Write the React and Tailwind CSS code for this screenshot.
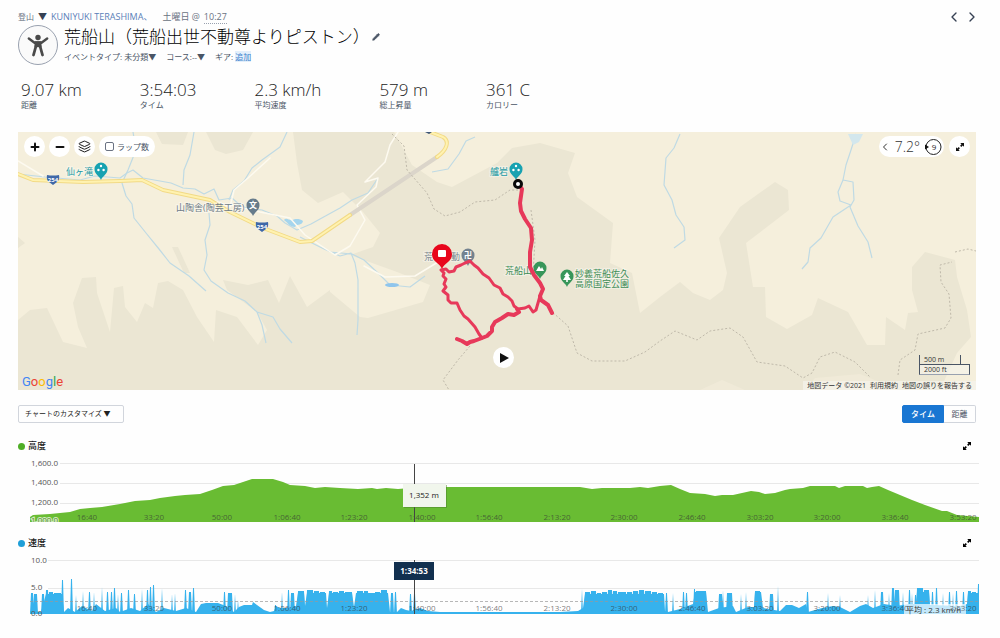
import { ChevronLeft, ChevronRight, Layers, Minus, Pencil, Plus } from "lucide-react";

const stats = [
  { value: "9.07 km", label: "距離" },
  { value: "3:54:03", label: "タイム" },
  { value: "2.3 km/h", label: "平均速度" },
  { value: "579 m", label: "総上昇量" },
  { value: "361 C", label: "カロリー" },
];

const timeTicks = [
  { x: 87, label: "16:40" },
  { x: 154, label: "33:20" },
  { x: 222, label: "50:00" },
  { x: 287, label: "1:06:40" },
  { x: 354, label: "1:23:20" },
  { x: 422, label: "1:40:00" },
  { x: 489, label: "1:56:40" },
  { x: 557, label: "2:13:20" },
  { x: 624, label: "2:30:00" },
  { x: 692, label: "2:46:40" },
  { x: 760, label: "3:03:20" },
  { x: 827, label: "3:20:00" },
  { x: 895, label: "3:36:40" },
  { x: 963, label: "3:53:20" },
];

const elevation =
  "30,517 33,515 50,514 60,513 70,512 80,509 90,508 102,507 120,504 135,501 150,500 160,498 175,496 185,495 200,494 212,490 223,486 234,485 243,482 252,479 273,479 283,482 290,485 305,486 315,488 325,487 340,488 358,489 372,488 377,489 386,488 398,489 410,488 440,487 580,487 592,489 602,488 630,488 640,487 648,488 660,486 671,485 680,489 690,493 705,494 715,496 722,495 733,495 742,493 751,491 759,492 765,494 775,493 785,490 790,489 803,488 810,486 835,486 839,488 845,486 863,486 867,488 872,487 879,486 888,490 900,495 912,500 925,505 942,511 947,511 957,515 979,517";

// [from, to, top] of each burst in the speed chart
const speedBars = [
  [31, 33, 593], [34, 37, 594], [42, 44, 594], [46, 48, 590], [49, 53, 592], [54, 61, 593], [62, 63, 580],
  [71, 72, 579], [76, 76, 595], [83, 83, 591], [89, 90, 592], [94, 94, 592], [102, 102, 587], [107, 108, 592],
  [111, 112, 592], [114, 115, 588], [118, 118, 594], [121, 122, 593], [128, 129, 590], [134, 135, 594],
  [142, 142, 589], [147, 148, 590], [150, 151, 587], [153, 154, 585], [162, 162, 588], [172, 172, 594],
  [175, 175, 593], [185, 186, 590], [189, 191, 592], [193, 194, 588], [224, 225, 592], [228, 232, 593],
  [235, 235, 594], [238, 238, 600], [275, 276, 605], [282, 282, 592], [288, 289, 590], [291, 294, 593],
  [298, 304, 591], [307, 313, 590], [314, 319, 591], [320, 325, 592], [329, 332, 591], [333, 338, 592],
  [339, 344, 591], [345, 352, 592], [357, 363, 591], [364, 368, 591], [369, 374, 593], [375, 380, 592],
  [381, 387, 590], [391, 393, 593], [395, 396, 592], [410, 411, 594], [414, 415, 593], [582, 582, 589],
  [585, 590, 592], [591, 596, 591], [597, 601, 593], [602, 607, 592], [608, 612, 590], [613, 617, 591],
  [618, 626, 592], [627, 632, 592], [633, 638, 591], [639, 644, 590], [645, 651, 591], [652, 657, 592],
  [658, 663, 593], [666, 667, 593], [673, 673, 593], [683, 684, 592], [686, 687, 593], [694, 695, 589],
  [696, 706, 591], [719, 722, 594], [723, 723, 590], [727, 732, 593], [741, 741, 594], [746, 746, 592],
  [755, 760, 591], [770, 773, 594], [778, 778, 586], [807, 808, 592], [828, 828, 593], [840, 840, 595],
  [868, 868, 595], [875, 875, 590], [881, 883, 592], [889, 889, 593], [892, 894, 588], [895, 899, 590],
  [903, 903, 592], [909, 910, 590], [912, 912, 593], [915, 916, 595], [917, 923, 588], [924, 929, 590],
  [932, 933, 592], [936, 937, 588], [943, 943, 593], [949, 950, 592], [953, 953, 593], [956, 957, 591],
  [963, 964, 592], [968, 971, 591], [972, 976, 592], [978, 979, 584],
];

const speedLow =
  "30,611 41,612 46,594 62,594 64,612 68,608 75,612 82,606 92,611 96,604 105,611 116,608 120,612 131,608 140,611 148,604 156,612 164,608 176,611 186,608 196,612 201,604 206,603 218,603 226,606 234,612 239,607 244,605 252,605 253,602 257,605 264,610 270,612 274,611 276,606 280,608 289,608 296,606 298,593 304,593 305,606 307,593 326,593 327,608 329,593 352,593 354,607 356,593 388,593 390,612 397,612 401,608 406,610 411,611 420,608 428,611 440,612 520,612 560,612 578,611 583,608 585,594 664,594 665,611 668,612 680,609 693,604 695,592 706,592 708,612 719,608 733,606 736,612 748,607 754,607 755,592 761,592 763,608 780,611 786,605 792,605 799,608 806,604 808,612 822,608 833,606 840,607 850,612 860,606 866,604 873,608 884,604 896,606 910,604 916,604 917,592 929,592 930,605 960,606 967,604 968,593 979,593";

const speedPath = speedBars.map(([from, to, top]) => `M${from - 1},614L${from},${top}L${to},${top}L${to + 1},614Z`).join("");

function ExpandIcon({ className }) {
  return (
    <svg viewBox="0 0 10 10" className={className} fill="currentColor" aria-hidden="true">
      <path d="M5.2 1H9v3.8L7.7 3.5 6.3 4.9 5.1 3.7l1.4-1.4zM4.8 9H1V5.2l1.3 1.3 1.4-1.4 1.2 1.2-1.4 1.4z" />
    </svg>
  );
}

function Header() {
  return (
    <header>
      <div className="flex justify-between">
        <p className="flex h-3 items-center gap-1 text-[9px] leading-3 text-gray-500">
          <button className="flex items-center gap-1 text-[8px]">登山 <span className="text-[9px] text-gray-700">▼</span></button>
          <a href="#profile" className="text-[#5a80b8]">KUNIYUKI TERASHIMA、</a>
          <span className="ml-1.5">土曜日 @</span>
          <span className="border-b border-dotted border-gray-400">10:27</span>
        </p>
        <nav className="-mr-1 flex h-3 items-center gap-0.5 text-gray-700">
          <button aria-label="前へ"><ChevronLeft size={16} /></button>
          <button aria-label="次へ"><ChevronRight size={16} /></button>
        </nav>
      </div>
      <div className="mt-0.5 flex gap-[6px]">
        <div className="flex size-10 items-center justify-center rounded-full border border-gray-400 bg-[#fafafa]">
          <svg viewBox="0 0 24 24" className="size-6 text-[#4a4a4a]" fill="currentColor" aria-hidden="true">
            <circle cx="12" cy="4.500" r="2.700" />
            <path d="M8.500 8.200h7v6h-7z" />
            <path d="M2.800 5.500 8.500 9.700h7l5.700-4.200" fill="none" stroke="currentColor" strokeWidth="2.400" strokeLinecap="round" strokeLinejoin="round" />
            <path d="M10 13 7.500 22M14 13l2.500 9" fill="none" stroke="currentColor" strokeWidth="2.800" strokeLinecap="round" />
          </svg>
        </div>
        <div>
          <div className="flex h-6 items-center gap-0.5">
            <h1 className="text-[17px] leading-[22px] font-light text-black">荒船山（荒船出世不動尊よりピストン）</h1>
            <button aria-label="編集"><Pencil size={8} className="fill-gray-600 text-gray-600" /></button>
          </div>
          <div className="mt-0.5 flex h-3 items-center gap-2.5 text-[8px] leading-3 text-gray-600">
            <button>イベントタイプ: 未分類▼</button>
            <button>コース:--▼</button>
            <p>ギア: <a href="#gear" className="bg-[#e3effb] text-[#3c82cc]">追加</a></p>
          </div>
        </div>
      </div>
    </header>
  );
}

function RouteMarker({ x, y, color, children }) {
  return (
    <g transform={`translate(${x} ${y})`}>
      <path d="M0 9C-1.500 5-6.500 3.500-6.500-2A6.500 6.500 0 0 1 6.500-2C6.500 3.500 1.500 5 0 9z" fill={color} />
      {children}
    </g>
  );
}

function MapDrawing() {
  return (
    <svg viewBox="18 132 958 258" preserveAspectRatio="xMidYMid slice" className="absolute inset-0 size-full" role="img" aria-label="ルートマップ">
      <rect x="18" y="132" width="958" height="258" fill="#f5efdc" />

      {/* forest and mountain shading */}
      <g fill="#ebe6d3">
        <path d="M18 390V320L30 310 47 308 63 342 87 348 78 327 73 303 82 278 96 277 97 293 110 332 114 288 123 286 125 307 137 322 145 303 153 308 158 283 168 281 183 290 197 317 214 342 216 310 237 317 258 345 267 330 257 312 227 290 223 280 248 285 268 280 279 303 290 276 307 307 330 290V390z" />
        <path d="M293 132 297 163 302 190 318 203 343 192 363 212 380 233 373 247 350 255 397 272 430 285 423 302 368 318 360 317 329 291V390H940L957 353 971 337 967 310 957 277 955 260 925 252 912 267V290L918 312 908 313 905 330 886 317 885 345H867L848 312 818 298 812 315 787 329 766 317 765 287H753L746 243 789 210 788 190 775 182 740 207 719 238 727 273 723 290 710 300 693 293 680 282 660 297 640 313 632 273 610 263 613 223 577 197 568 173 575 153 540 143 512 148 497 163 452 187 437 182 412 165 394 132z" />
        <path d="M206 132 215 150 226 154 243 150 253 132zM156 132 162 144 183 145 188 132zM172 247 178 247 190 273 184 273zM18 237 25 243 18 248z" />
      </g>
      <path d="M700 390 722 380 745 390zM805 390 815 378 860 374 900 390z" fill="#f0ead8" />

      {/* rivers */}
      <g fill="none" stroke="#bfdae4" strokeWidth="1.200" strokeLinejoin="round">
        <path d="M194 132 190 155 184 170 183 185M287 132 280 147 262 160 252 168 244 181 233 190 229 200" />
        <path d="M18 174 45 177 80 180 95 176 120 178 127 173 133 170 143 178 160 181 171 183 183 188 195 189 204 194 214 189 219 200 232 198 242 207 262 210 277 216 285 223 297 230 311 224 320 219 340 208 352 200 368 193 378 178" />
        <path d="M133 132 136 150 128 170 122 183 126 196 132 204 134 218 146 233 159 249 170 263 189 276 206 291" />
        <path d="M209 213 210 225 205 240 207 255 204 270 211 281 228 293 245 301 257 312 262 325 266 343M257 312 273 317 280 329 292 343" />
        <path d="M300 237 324 249 340 256 351 253 355 263 358 280 358 320 357 335M330 252 352 254 364 260 379 274 390 285 410 287 425 276" />
        <path d="M432 172 448 169 459 154 466 141 475 137M680 134 674 148 666 158 664 185 672 200 676 215 684 227 685 240 674 248" />
        <path d="M856 134 851 150 846 165 843 180 838 192 840 201 851 205 833 217 821 238 810 248 808 262 802 269M843 180 853 182 854 200 850 207 858 226 868 242 872 258" />
      </g>
      <path d="M284 220c3-3 5 1 8 0s7-2 11 1c-1 5-5 2-8 6-5 0-7-4-11-7z" fill="#a5d5ed" />
      <ellipse cx="392" cy="285" rx="7" ry="2" fill="#8fc5ec" />
      <path d="M848 134h15l-4 8-6 3z" fill="#d3e7ed" />

      {/* roads */}
      <g fill="none" strokeLinecap="round" strokeLinejoin="round">
        <path d="M18 161 43 176M210 199 230 207 234 190 248 178 270 158M230 205 260 212 290 218 305 235 335 255 350 246 365 220 357 205 376 187 378 178 365 182 385 162 390 145 398 132M364 266 385 277 415 276 438 262" stroke="#fdfaf0" strokeWidth="1.500" />
        <path d="M350 215 437 157" stroke="#dbd5ca" strokeWidth="4" />
        <path d="M18 174 33 180 83 182 120 181 142 180 163 190 210 200 230 212 263 228 300 242 312 241 350 215M437 157C447 150 450 141 443 137L430 132" stroke="#f2da86" strokeWidth="4" />
        <path d="M18 174 33 180 83 182 120 181 142 180 163 190 210 200 230 212 263 228 300 242 312 241 350 215M437 157C447 150 450 141 443 137L430 132" stroke="#fff2b0" strokeWidth="2" />
      </g>
      <g fill="none" stroke="#bfb9aa" strokeWidth="1" strokeDasharray="2 2">
        <path d="M392 134 404 146 407 170 427 193 434 209 445 216 460 212 475 202 495 200 510 190 518 190M531 210 535 240 533 275" />
        <path d="M470 346 458 360 443 380 449 390M550 310 568 326 577 353 592 361 625 361 645 352 660 341 675 331 697 340 710 331 730 328 743 337 757 362 785 366 803 378 812 373 820 357 835 352 855 362 870 377" />
        <path d="M898 375 900 360 915 350 918 334 945 328 951 318 949 294 941 282 940 265 952 262M955 252 968 249 976 251" />
      </g>

      {/* highway shields */}
      {[[53, 180], [262, 227]].map(([x, y]) => (
        <g key={x}>
          <path d={`M${x - 6} ${y - 5}q6 1 12 0q1 5-2 7l-4 3l-4-3q-3-2-2-7z`} fill="#3f68a8" />
          <text x={x} y={y + 2} textAnchor="middle" fontSize="6" fontWeight="700" fill="#fff">254</text>
        </g>
      ))}
      <path d="M425 132h7l-3 2z" fill="#3d5577" />

      {/* places */}
      <g fontSize="9" stroke="#fff" strokeWidth="2" strokeOpacity="0.400" style={{ paintOrder: "stroke" }}>
        <text x="66" y="175" fill="#239aa5">仙ヶ滝</text>
        <text x="176" y="211" fill="#6f7c87">山陶舎(陶芸工房)</text>
        <text x="490" y="175" fill="#239aa5">艫岩</text>
        <text x="424" y="260" fill="#7a858d">荒</text>
        <text x="451" y="260" fill="#7a858d">動</text>
        <text x="505" y="274" fill="#3e8d56">荒船山</text>
        <text x="575" y="277" fill="#3e8d56">妙義荒船佐久</text>
        <text x="575" y="287" fill="#3e8d56">高原国定公園</text>
      </g>
      {[[101, 171], [516, 171]].map(([x, y]) => (
        <RouteMarker key={x} x={x} y={y} color="#17a2b1">
          <g fill="#fff"><circle cx="0" cy="-5" r="1.200" /><circle cx="-2.600" cy="-1" r="1.200" /><circle cx="2.600" cy="-1" r="1.200" /></g>
        </RouteMarker>
      ))}
      <RouteMarker x={253} y={207} color="#667b8b">
        <text y="1" textAnchor="middle" fontSize="8" fontWeight="700" fill="#fff">文</text>
      </RouteMarker>
      <RouteMarker x={540} y={270} color="#38965a">
        <path d="M-4 1-1-4 1-1 2-3 4 1z" fill="#fff" />
      </RouteMarker>
      <RouteMarker x={567} y={278} color="#38965a">
        <path d="M0-6 3-2H1.500L4 2H.8V4H-.8V2H-4L-1.500-2H-3z" fill="#fff" />
      </RouteMarker>
      <RouteMarker x={468} y={257} color="#73828f">
        <text y="1" textAnchor="middle" fontSize="8" fontWeight="700" fill="#fff">卍</text>
      </RouteMarker>

      {/* recorded track */}
      <g fill="none" stroke="#e7395a" strokeWidth="3" strokeLinecap="round" strokeLinejoin="round">
        <path d="M518 184 522 189 520 203 521 211 525 219 531 228 532 240 530 252 530 267 534 275 540 283 543 289 540 296 541 300 548 305 552 313" strokeWidth="4" />
        <path d="M540 296 538 303 536 310 533 312 529 306 525 308 518 309 514 306 512 301 508 297 503 294 500 288 494 285 489 278 483 274 478 268 474 265 470 261 465 263 461 265 456 267 454 271 449 272 446 269 441 270 444 273 443 276 446 279 444 284 446 287 443 291 448 295 448 300 451 303 457 303 460 310 464 316 468 319 475 327 479 334 482 338" />
        <path d="M517 309 519 312 514 315 508 314 502 318 495 322 492 327 492 331 487 336 482 338 474 341 470 342 467 344 462 341 457 339" strokeWidth="4" />
      </g>
      <circle cx="518" cy="184" r="3.500" fill="#fff" stroke="#0a0a0a" strokeWidth="3" />
      <path d="M442 269c-2-6-10-7-10-15a10 10 0 0 1 20 0c0 8-8 9-10 15z" fill="#e8061c" />
      <rect x="438" y="250" width="8" height="7" rx="1" fill="#fff" />
    </svg>
  );
}

function GoogleLogo() {
  return (
    <span className="font-[Roboto,sans-serif] text-[13px] leading-4">
      <span className="text-[#4285f4]">G</span>
      <span className="text-[#ea4335]">o</span>
      <span className="text-[#fbbc05]">o</span>
      <span className="text-[#4285f4]">g</span>
      <span className="text-[#34a853]">l</span>
      <span className="text-[#ea4335]">e</span>
    </span>
  );
}

function RouteMap() {
  const round = "flex size-[21px] items-center justify-center rounded-full bg-white text-[#111]";
  return (
    <section className="relative mt-[21px] flex h-[258px] flex-col justify-between overflow-hidden">
      <MapDrawing />
      <div className="relative flex justify-between px-1.5 pt-1">
        <div className="flex gap-1">
          <button className={round} aria-label="拡大"><Plus size={12} strokeWidth={4} /></button>
          <button className={round} aria-label="縮小"><Minus size={12} strokeWidth={4} /></button>
          <button className={round} aria-label="レイヤー"><Layers size={13} strokeWidth={1.75} /></button>
          <label className="flex h-[21px] items-center gap-[3px] rounded-full bg-white px-1.5 text-[8px] text-gray-600">
            <input type="checkbox" className="size-[9px] appearance-none rounded-[2px] border border-gray-500" />
            ラップ数
          </label>
        </div>
        <div className="flex gap-[5px]">
          <div className="flex h-[21px] items-center rounded-full bg-white text-[#333]">
            <button aria-label="天気"><ChevronLeft size={12} /></button>
            <span className="ml-1 text-[14px] font-light">7.2°</span>
            <svg viewBox="0 0 18 18" className="mr-0.5 ml-1 size-[18px]" role="img" aria-label="風 9">
              <circle cx="9.500" cy="9" r="7.500" fill="none" stroke="#222" />
              <path d="M1 6.500 5 9 1 11.500z" fill="#111" />
              <text x="10" y="12" textAnchor="middle" fontSize="8" fill="#222">9</text>
            </svg>
          </div>
          <button className={round} aria-label="全画面"><ExpandIcon className="size-[10px]" /></button>
        </div>
      </div>
      <div className="relative flex items-end justify-between pl-1">
        <GoogleLogo />
        <div className="flex flex-col items-end text-[7px] leading-[9px] text-[#333]">
          <div className="mr-[6px] mb-1.5 w-[51px]">
            <div className="w-[42px] border-x border-gray-600 pl-1">500 m</div>
            <div className="border-x border-t border-b border-gray-600 border-b-gray-400 bg-[#f5f3ec]/60 pl-1">2000 ft</div>
          </div>
          <div className="flex gap-1 bg-[#f5f3ec]/70 px-1 whitespace-nowrap">
            <span>地図データ ©2021</span>
            <a href="#terms">利用規約</a>
            <a href="#report">地図の誤りを報告する</a>
          </div>
        </div>
      </div>
      <button className="absolute top-[215px] left-[475px] flex size-[21px] items-center justify-center rounded-full bg-white" aria-label="再生">
        <svg viewBox="0 0 10 12" className="h-3 w-[10px]"><path d="M1 1v10l9-5z" fill="#111" /></svg>
      </button>
    </section>
  );
}

function ChartHeader({ title, dotClass }) {
  return (
    <div className="flex h-4 items-center justify-between pr-[7px]">
      <h2 className="flex items-center gap-[3px] text-[9px] leading-4 font-medium text-[#222]">
        <span className={`size-[7px] rounded-full ${dotClass}`} />
        {title}
      </h2>
      <button aria-label={`${title}を拡大`}><ExpandIcon className="size-[10px]" /></button>
    </div>
  );
}

function TimeAxis({ y }) {
  return (
    <g fill="#333" fillOpacity="0.650" textAnchor="middle">
      {timeTicks.map((tick) => (
        <text key={tick.label} x={tick.x} y={y}>{tick.label}</text>
      ))}
    </g>
  );
}

function ElevationChart() {
  return (
    <section className="mt-[15px] -mr-[3px]">
      <ChartHeader title="高度" dotClass="bg-[#4fae26]" />
      <svg viewBox="18 454 961 72" className="w-full" fontSize="8" role="img" aria-label="高度チャート">
        <path d="M60 463.500H979M60 483.500H979M60 503.500H979" stroke="#e8e8e8" />
        <polygon points={`30,522 ${elevation} 979,522`} fill="#69bc33" />
        <g fill="#555">
          <text x="31" y="466">1,600.0</text>
          <text x="31" y="485">1,400.0</text>
          <text x="31" y="505">1,200.0</text>
        </g>
        <svg x="30" y="516" width="34" height="6" viewBox="30 516 34 6">
          <text x="31" y="523" fill="#4c8c24" stroke="#d5ecc5" strokeWidth="2" style={{ paintOrder: "stroke" }}>1,000.0</text>
        </svg>
        <TimeAxis y={520} />
        <path d="M414.500 464V522" stroke="#444" />
        <rect x="404" y="485" width="43" height="23" fill="#4c7f2b" fillOpacity="0.500" />
        <rect x="403" y="484" width="43" height="23" fill="#f1f6ec" />
        <text x="424" y="498" textAnchor="middle" fill="#222">1,352 m</text>
      </svg>
    </section>
  );
}

function SpeedChart() {
  return (
    <section className="mt-[9px] -mr-[3px]">
      <ChartHeader title="速度" dotClass="bg-[#1f9fd8]" />
      <svg viewBox="18 551 961 67" className="w-full" fontSize="8" role="img" aria-label="速度チャート">
        <path d="M48 560.500H979M48 588.500H979" stroke="#e8e8e8" />
        <g fill="#36b2ed">
          <path d={speedPath} />
          <polygon points={`30,614 ${speedLow} 979,614`} />
        </g>
        <path d="M30 601.500H979" stroke="#999" strokeDasharray="3 2" strokeOpacity="0.700" />
        <g fill="#555">
          <text x="31" y="563">10.0</text>
          <text x="31" y="590">5.0</text>
          <text x="31" y="616">0.0</text>
        </g>
        <rect x="904" y="604" width="62" height="10" fill="#fff" fillOpacity="0.700" />
        <TimeAxis y={611} />
        <text x="906" y="613" fill="#333">平均 : 2.3 km/h</text>
        <path d="M414.500 560V614" stroke="#444" />
        <rect x="394" y="562" width="40" height="18" fill="#12304f" />
        <text x="414" y="574" textAnchor="middle" fontWeight="700" fill="#fff">1:34:53</text>
      </svg>
    </section>
  );
}

export default function App() {
  return (
    <main className="bg-[#fefefe] px-6 pt-[11px] pb-5 pl-[18px] font-['Open_Sans','Noto_Sans_CJK_JP',sans-serif]">
      <Header />
      <dl className="mt-4 flex gap-[58px] pl-[3px]">
        {stats.map((stat) => (
          <div key={stat.label} className="flex flex-col-reverse">
            <dt className="text-[8px] leading-3 text-gray-600">{stat.label}</dt>
            <dd className="text-[17px] leading-[18px] font-light text-[#222]">{stat.value}</dd>
          </div>
        ))}
      </dl>
      <RouteMap />
      <div className="mt-[15px] flex justify-between text-[8px] leading-4">
        <button className="w-[106px] rounded-xs border border-gray-300 px-1.5 text-left text-[7px] text-[#222]">チャートのカスタマイズ ▼</button>
        <div className="flex">
          <button className="w-[42px] rounded-l-xs border border-[#1976d2] bg-[#1976d2] font-medium text-white">タイム</button>
          <button className="w-8 rounded-r-xs border border-l-0 border-gray-300 text-gray-600">距離</button>
        </div>
      </div>
      <ElevationChart />
      <SpeedChart />
    </main>
  );
}
